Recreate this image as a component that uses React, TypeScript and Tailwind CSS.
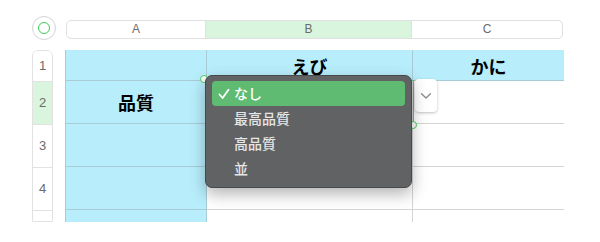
import React from "react";

const jp = { fontFamily: '"Noto Sans CJK JP", "Noto Sans", sans-serif' };
const lat = { fontFamily: '"Liberation Sans", Arial, sans-serif' };

export default function App() {
  const rowH = [31, 43, 43, 43, 43];
  return (
    <div className="relative w-[600px] h-[242px] bg-white overflow-hidden" style={jp}>
      {/* header line */}
      <div className="flex items-center pt-[16px]">
        <div className="ml-[32px] w-[24px] h-[24px] rounded-full border border-[#d4d4d4] bg-white flex items-center justify-center">
          <div className="w-[12px] h-[12px] rounded-full border-[1.5px] border-[#3ccc55]" />
        </div>
        <div className="ml-[10px] flex h-[19px] mt-[2px] border border-[#e0e0e0] rounded-[5px] overflow-hidden text-[12px] text-[#6b6b6b]" style={lat}>
          <div className="w-[139px] flex items-center justify-center border-r border-[#e0e0e0]">A</div>
          <div className="w-[206px] flex items-center justify-center bg-[#d9f5dd] border-r border-[#e0e0e0]">B</div>
          <div className="w-[150px] flex items-center justify-center">C</div>
        </div>
      </div>

      {/* body */}
      <div className="flex mt-[10px] h-[172px] overflow-hidden">
        <div className="ml-[32px] w-[21px] border border-[#e2e2e2] rounded-t-[6px] overflow-hidden flex flex-col text-[13px] text-[#6b6b6b]" style={lat}>
          {rowH.map((h, i) => (
            <div
              key={i}
              className={`shrink-0 flex items-center justify-center border-b border-[#e2e2e2] ${i === 1 ? "bg-[#d9f5dd]" : "bg-white"}`}
              style={{ height: h }}
            >
              {i < 4 ? i + 1 : ""}
            </div>
          ))}
        </div>
        <div className="ml-[12px] grid grid-cols-[141px_206px_151px] grid-rows-[31px_43px_43px_43px_43px] border-l border-[#a9cbd5]">
          {/* row 1 */}
          <div className="bg-[#b8eefc] border-r border-b border-[#a9cbd5]" />
          <div className="bg-[#b8eefc] border-r border-b border-[#a9cbd5] flex items-center justify-center text-[18px] font-bold text-black pt-[2px]">えび</div>
          <div className="bg-[#b8eefc] border-b border-[#a9cbd5] flex items-center justify-center text-[18px] font-bold text-black pt-[2px]">かに</div>
          {/* row 2 */}
          <div className="bg-[#b8eefc] border-r border-b border-[#a9cbd5] flex items-center justify-center text-[18px] font-bold text-black">品質</div>
          <div className="bg-white border-r border-b border-[#d4d4d4]" />
          <div className="bg-white border-b border-[#d4d4d4]" />
          {/* rows 3-5 */}
          {[0, 1, 2].map((r) => (
            <React.Fragment key={r}>
              <div className="bg-[#b8eefc] border-r border-b border-[#a9cbd5]" />
              <div className="bg-white border-r border-b border-[#d4d4d4]" />
              <div className="bg-white border-b border-[#d4d4d4]" />
            </React.Fragment>
          ))}
        </div>
      </div>

      {/* selection of B2 */}
      <div className="absolute left-[205px] top-[80px] w-[209px] h-[45px] border-[1.5px] border-[#4fcf63]" />
      <div className="absolute left-[200px] top-[75px] w-[8px] h-[8px] rounded-full bg-white border-[1.5px] border-[#4fcf63]" />
      <div className="absolute left-[409px] top-[121px] w-[8px] h-[8px] rounded-full bg-white border-[1.5px] border-[#4fcf63]" />

      {/* dropdown toggle */}
      <div className="absolute left-[415px] top-[79px] w-[22px] h-[33px] bg-white rounded-[4px] shadow-[0_1px_3px_rgba(0,0,0,0.25)] flex items-center justify-center">
        <svg width="12" height="8" viewBox="0 0 12 8" fill="none">
          <path d="M1.5 1.8 L6 6 L10.5 1.8" stroke="#8a8a8a" strokeWidth="1.3" strokeLinecap="round" strokeLinejoin="round" />
        </svg>
      </div>

      {/* menu */}
      <div className="absolute left-[205px] top-[75px] w-[207px] h-[113px] bg-[#616264] border border-[#48494b] rounded-[7px] shadow-[0_6px_16px_rgba(0,0,0,0.3)] px-[6px] pt-[5px] text-[14px] font-medium">
        <div className="h-[25px] rounded-[4px] bg-[#60bb72] flex items-center text-white">
          <svg className="ml-[6px]" width="12" height="12" viewBox="0 0 12 12" fill="none">
            <path d="M1.5 6.5 L4.6 10 L10.5 1.8" stroke="white" strokeWidth="1.8" strokeLinecap="round" strokeLinejoin="round" />
          </svg>
          <span className="ml-[4px]">なし</span>
        </div>
        {["最高品質", "高品質", "並"].map((t) => (
          <div key={t} className="h-[25px] flex items-center pl-[22px] text-[#e6e6e6]">
            {t}
          </div>
        ))}
      </div>
    </div>
  );
}
